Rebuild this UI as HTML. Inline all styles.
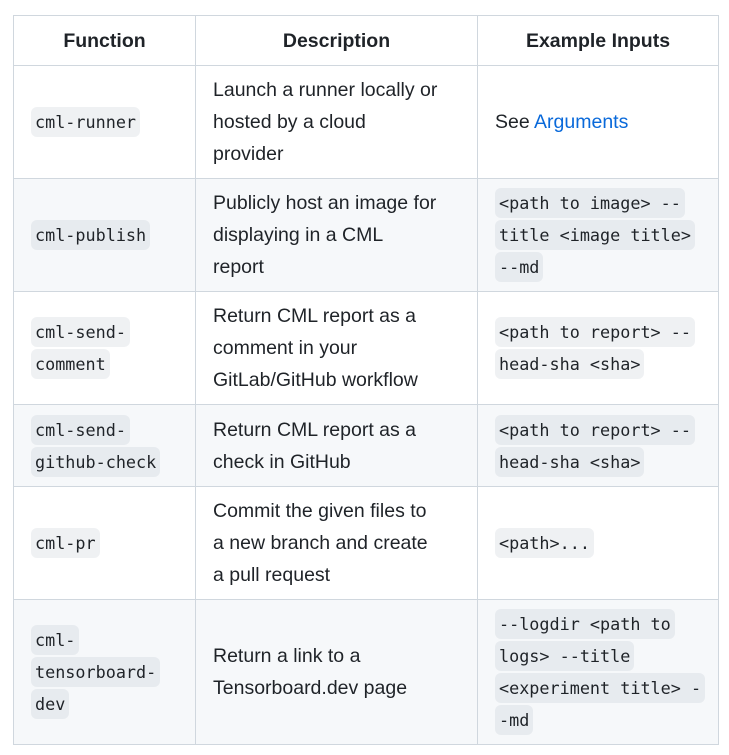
<!DOCTYPE html>
<html><head><meta charset="utf-8"><style>
body{margin:0;background:#fff;width:729px;height:755px;overflow:hidden;font-family:"Liberation Sans","DejaVu Sans",sans-serif;color:#1f2328;}
table{position:absolute;left:13px;top:15px;border-collapse:collapse;table-layout:fixed;}
td,th{border:1px solid #d0d7de;padding:0 0 0 17px;vertical-align:middle;font-size:19.5px;line-height:32px;text-align:left;}
th{font-weight:600;text-align:center;padding:0;}
tr.e td{background:#f6f8fa;}
code{font-family:"DejaVu Sans Mono","Liberation Mono",monospace;font-size:16.8px;line-height:1;background:rgba(175,184,193,0.2);border-radius:6px;padding:5px 4px;}
a{color:#0969da;text-decoration:none;}
</style></head><body>
<table>
<colgroup><col style="width:182px"><col style="width:282px"><col style="width:241px"></colgroup>
<tr style="height:50px"><th>Function</th><th>Description</th><th>Example Inputs</th></tr>
<tr style="height:113px"><td><code>cml-runner</code></td><td>Launch a runner locally or<br>hosted by a cloud<br>provider</td><td>See <a>Arguments</a></td></tr>
<tr class="e" style="height:113px"><td><code>cml-publish</code></td><td>Publicly host an image for<br>displaying in a CML<br>report</td><td><code>&lt;path to image&gt; --</code><br><code>title &lt;image title&gt;</code><br><code>--md</code></td></tr>
<tr style="height:113px"><td><code>cml-send-</code><br><code>comment</code></td><td>Return CML report as a<br>comment in your<br>GitLab/GitHub workflow</td><td><code>&lt;path to report&gt; --</code><br><code>head-sha &lt;sha&gt;</code></td></tr>
<tr class="e" style="height:82px"><td><code>cml-send-</code><br><code>github-check</code></td><td>Return CML report as a<br>check in GitHub</td><td><code>&lt;path to report&gt; --</code><br><code>head-sha &lt;sha&gt;</code></td></tr>
<tr style="height:113px"><td><code>cml-pr</code></td><td>Commit the given files to<br>a new branch and create<br>a pull request</td><td><code>&lt;path&gt;...</code></td></tr>
<tr class="e" style="height:145px"><td><code>cml-</code><br><code>tensorboard-</code><br><code>dev</code></td><td>Return a link to a<br>Tensorboard.dev page</td><td><code> --logdir &lt;path to</code><br><code>logs&gt; --title</code><br><code>&lt;experiment title&gt; -</code><br><code>-md</code></td></tr>
</table>
</body></html>
